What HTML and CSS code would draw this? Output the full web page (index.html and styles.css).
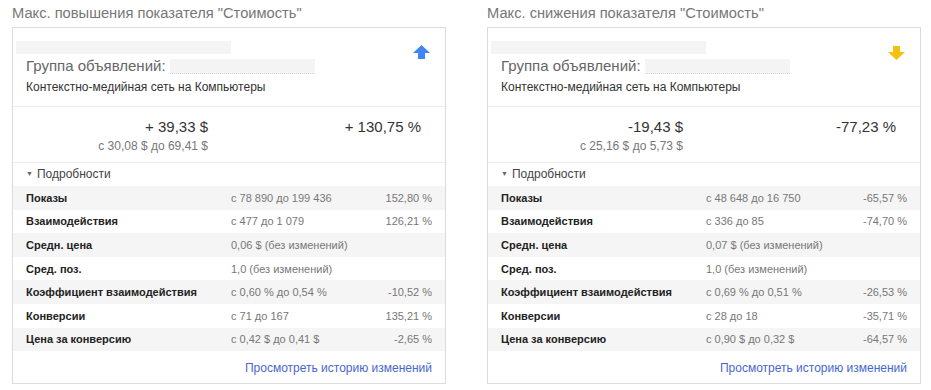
FILE: index.html
```html
<!DOCTYPE html>
<html lang="ru">
<head>
<meta charset="utf-8">
<title>Стоимость</title>
<link rel="stylesheet" href="styles.css">
</head>
<body>
<div class="page">
  <section class="col">
    <h2 class="title">Макс. повышения показателя "Стоимость"</h2>
    <div class="card">
      <div class="head">
        <div class="head-main">
          <div class="redact redact-top"></div>
          <div class="group">Группа объявлений: <span class="redact redact-name"></span></div>
          <div class="net">Контекстно-медийная сеть на Компьютеры</div>
        </div>
        <svg class="arrow" width="17" height="14" viewBox="0 0 17 14"><path d="M8.5 0 L17 8 L12 8 L12 14 L5 14 L5 8 L0 8 Z" fill="#4285f4"/></svg>
      </div>
      <div class="metrics">
        <div class="m-abs">
          <div class="m-big">+ 39,33 $</div>
          <div class="m-small">с 30,08 $ до 69,41 $</div>
        </div>
        <div class="m-pct">
          <div class="m-big">+ 130,75 %</div>
        </div>
      </div>
      <div class="toggle"><span class="tri">▼</span>Подробности</div>
      <div class="rows">
        <div class="row"><span class="lbl">Показы</span><span class="mid">с 78 890 до 199 436</span><span class="pct">152,80 %</span></div>
        <div class="row"><span class="lbl">Взаимодействия</span><span class="mid">с 477 до 1 079</span><span class="pct">126,21 %</span></div>
        <div class="row"><span class="lbl">Средн. цена</span><span class="mid">0,06 $ (без изменений)</span><span class="pct"></span></div>
        <div class="row"><span class="lbl">Сред. поз.</span><span class="mid">1,0 (без изменений)</span><span class="pct"></span></div>
        <div class="row"><span class="lbl">Коэффициент взаимодействия</span><span class="mid">с 0,60 % до 0,54 %</span><span class="pct">-10,52 %</span></div>
        <div class="row"><span class="lbl">Конверсии</span><span class="mid">с 71 до 167</span><span class="pct">135,21 %</span></div>
        <div class="row"><span class="lbl">Цена за конверсию</span><span class="mid">с 0,42 $ до 0,41 $</span><span class="pct">-2,65 %</span></div>
      </div>
      <div class="foot"><a class="link" href="#">Просмотреть историю изменений</a></div>
    </div>
  </section>
  <section class="col">
    <h2 class="title">Макс. снижения показателя "Стоимость"</h2>
    <div class="card">
      <div class="head">
        <div class="head-main">
          <div class="redact redact-top"></div>
          <div class="group">Группа объявлений: <span class="redact redact-name"></span></div>
          <div class="net">Контекстно-медийная сеть на Компьютеры</div>
        </div>
        <svg class="arrow arrow-down" width="17" height="14" viewBox="0 0 17 14"><path d="M8.5 14 L17 6 L12 6 L12 0 L5 0 L5 6 L0 6 Z" fill="#f4c20d"/></svg>
      </div>
      <div class="metrics">
        <div class="m-abs">
          <div class="m-big">-19,43 $</div>
          <div class="m-small">с 25,16 $ до 5,73 $</div>
        </div>
        <div class="m-pct">
          <div class="m-big">-77,23 %</div>
        </div>
      </div>
      <div class="toggle"><span class="tri">▼</span>Подробности</div>
      <div class="rows">
        <div class="row"><span class="lbl">Показы</span><span class="mid">с 48 648 до 16 750</span><span class="pct">-65,57 %</span></div>
        <div class="row"><span class="lbl">Взаимодействия</span><span class="mid">с 336 до 85</span><span class="pct">-74,70 %</span></div>
        <div class="row"><span class="lbl">Средн. цена</span><span class="mid">0,07 $ (без изменений)</span><span class="pct"></span></div>
        <div class="row"><span class="lbl">Сред. поз.</span><span class="mid">1,0 (без изменений)</span><span class="pct"></span></div>
        <div class="row"><span class="lbl">Коэффициент взаимодействия</span><span class="mid">с 0,69 % до 0,51 %</span><span class="pct">-26,53 %</span></div>
        <div class="row"><span class="lbl">Конверсии</span><span class="mid">с 28 до 18</span><span class="pct">-35,71 %</span></div>
        <div class="row"><span class="lbl">Цена за конверсию</span><span class="mid">с 0,90 $ до 0,32 $</span><span class="pct">-64,57 %</span></div>
      </div>
      <div class="foot"><a class="link" href="#">Просмотреть историю изменений</a></div>
    </div>
  </section>
</div>
</body>
</html>
```

FILE: styles.css
```css
html, body {
  margin: 0;
  padding: 0;
  background: #ffffff;
}
body {
  font-family: "Liberation Sans", Arial, sans-serif;
  color: #222;
}
.page {
  display: flex;
  gap: 41px;
  padding-left: 12px;
}
.col {
  width: 434px;
}
.title {
  margin: 0;
  height: 27px;
  line-height: 26px;
  font-size: 14.7px;
  font-weight: normal;
  color: #777;
  white-space: nowrap;
}
.card {
  border: 1px solid #dcdcdc;
  box-shadow: 0 1px 1px rgba(0,0,0,0.06);
}
.head {
  display: flex;
  align-items: flex-start;
  border-bottom: 1px solid #ebebeb;
  padding: 13px 15px 10px 3px;
}
.head-main {
  flex: 1;
}
.redact {
  background: #f4f4f4;
  display: inline-block;
}
.redact-top {
  display: block;
  width: 215px;
  height: 13px;
}
.group {
  margin-top: 2px;
  padding-left: 10px;
  height: 20px;
  line-height: 20px;
  font-size: 15px;
  color: #666;
  display: flex;
  align-items: center;
  gap: 4px;
}
.redact-name {
  width: 145px;
  height: 14px;
  border-bottom: 1px dotted #c9d6f2;
}
.net {
  margin-top: 2px;
  padding-left: 10px;
  line-height: 18px;
  font-size: 12px;
  color: #333;
}
.arrow {
  margin-top: 4px;
}
.arrow-down {
  margin-top: 5px;
}
.metrics {
  display: grid;
  grid-template-columns: 195px 213px;
  border-bottom: 1px solid #ebebeb;
  padding: 10px 0 8px 0;
}
.m-abs, .m-pct {
  text-align: right;
}
.m-big {
  font-size: 15px;
  line-height: 20px;
  color: #333;
}
.m-small {
  margin-top: 1px;
  font-size: 12px;
  line-height: 16px;
  color: #777;
}
.toggle {
  height: 23px;
  line-height: 22px;
  padding-left: 13px;
  font-size: 12px;
  color: #444;
}
.tri {
  display: inline-block;
  font-size: 7px;
  color: #666;
  vertical-align: 2px;
  margin-right: 4px;
}
.row {
  display: grid;
  grid-template-columns: 205px 1fr auto;
  align-items: center;
  height: 23.6px;
  padding: 0 13px;
  font-size: 11px;
}
.row:nth-child(odd) {
  background: #f5f5f5;
}
.lbl {
  font-weight: bold;
  color: #222;
  white-space: nowrap;
}
.mid {
  color: #777;
  white-space: nowrap;
}
.pct {
  color: #777;
  text-align: right;
}
.foot {
  height: 32px;
  line-height: 32px;
  text-align: right;
  padding-right: 13px;
}
.link {
  font-size: 12px;
  color: #4767d0;
  text-decoration: none;
}
```
